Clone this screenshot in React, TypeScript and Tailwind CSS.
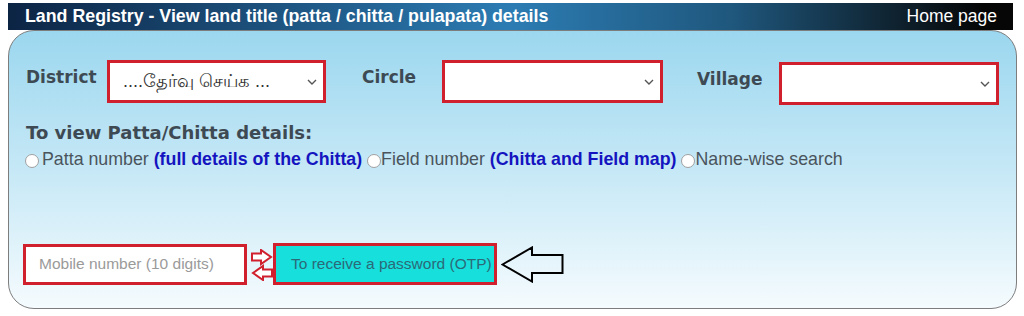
import React from 'react';

const Chevron = () => (
  <svg width="10" height="6" viewBox="0 0 10 6" className="shrink-0">
    <path d="M1 1 L5 5 L9 1" fill="none" stroke="#555" strokeWidth="1.4" />
  </svg>
);

interface SelectBoxProps {
  value?: string;
  width: string;
}

const SelectBox: React.FC<SelectBoxProps> = ({ value, width }) => (
  <div
    className={`${width} h-[43px] shrink-0 border-[3px] border-[#d0202e] bg-white flex items-center justify-between pl-[13px] pr-[6px]`}
  >
    <span className="text-[18px] text-[#333] font-['Liberation_Sans','Noto_Sans',sans-serif]">{value}</span>
    <Chevron />
  </div>
);

const Radio = () => (
  <span className="inline-block w-[14px] h-[14px] rounded-full border border-[#a0a0a0] bg-white shrink-0 mt-[3px]" />
);

const DoubleArrow = () => (
  <svg width="22" height="32" viewBox="0 0 22 32" className="shrink-0">
    <polygon points="1,4.5 10,4.5 10,1 20,8 10,15 10,11.5 1,11.5" fill="#fff" stroke="#d0202e" strokeWidth="2" strokeLinejoin="miter" />
    <polygon points="21,20.5 12,20.5 12,17 2,24 12,31 12,27.5 21,27.5" fill="#fff" stroke="#d0202e" strokeWidth="2" strokeLinejoin="miter" />
  </svg>
);

const BigArrow = () => (
  <svg width="63" height="37" viewBox="0 0 63 37" className="shrink-0">
    <polygon points="1.5,18.5 31,1.5 31,9 61.5,9 61.5,27 31,27 31,35.5" fill="none" stroke="#000" strokeWidth="2" />
  </svg>
);

export default function App() {
  const label = "font-['DejaVu_Sans',sans-serif] font-bold leading-[20px] text-[#3e4a53]";
  return (
    <div className="w-[1024px] h-[316px] bg-white pl-[8px] pt-[3px] font-['Liberation_Sans',Arial,sans-serif]">
      <div className="w-[1005px] h-[27px] flex items-center justify-between pl-[17px] pr-[16px] text-white text-[17.8px] bg-[linear-gradient(to_right,#0c2444_0%,#2c7cb3_50%,#1f577d_72%,#060606_97%)]">
        <span className="font-bold">Land Registry - View land title (patta / chitta / pulapata) details</span>
        <span className="text-[17.5px]">Home page</span>
      </div>

      <div className="w-[1009px] h-[279px] border border-[#7d7d7d] rounded-[26px] bg-[linear-gradient(to_bottom,#9bd7ef_0%,#c6e8f6_50%,#f5fbfe_100%)] pt-[29px]">
        <div className="flex items-start pl-[17px]">
          <div className={`w-[81px] shrink-0 mt-[7px] text-[17px] ${label}`}>District</div>
          <SelectBox width="w-[219px]" value="....தேர்வு செய்க ..." />
          <div className={`w-[116px] shrink-0 mt-[7px] pl-[36px] text-[17px] ${label}`}>Circle</div>
          <SelectBox width="w-[221px]" />
          <div className={`w-[116px] shrink-0 mt-[9px] pl-[34px] text-[17px] ${label}`}>Village</div>
          <div className="mt-[2px]">
            <SelectBox width="w-[220px]" />
          </div>
        </div>

        <div className={`mt-[18px] pl-[17px] text-[18px] ${label}`}>To view Patta/Chitta details:</div>

        <div className="mt-[6px] pl-[16px] flex items-center text-[17.8px] leading-[20px] text-[#4a545c] whitespace-pre">
          <Radio />
          <span className="ml-[3px]">Patta number </span>
          <span className="font-bold text-[#1414c0]">(full details of the Chitta)</span>
          <span> </span>
          <Radio />
          <span>Field number </span>
          <span className="font-bold text-[#1414c0]">(Chitta and Field map)</span>
          <span> </span>
          <Radio />
          <span>Name-wise search</span>
        </div>

        <div className="mt-[74px] pl-[14px] flex items-center">
          <div className="w-[224px] h-[41px] border-[3px] border-[#d0202e] bg-white flex items-center pl-[13px] text-[15.5px] text-[#9a9a9a]">
            Mobile number (10 digits)
          </div>
          <div className="ml-[4px] mt-[1px]">
            <DoubleArrow />
          </div>
          <div className="w-[224px] h-[42px] border-[3px] border-[#d0202e] bg-[#17dfdc] flex items-center pl-[15px] text-[15.5px] text-[#2b6a78]">
            To receive a password (OTP)
          </div>
          <div className="ml-[4px]">
            <BigArrow />
          </div>
        </div>
      </div>
    </div>
  );
}
